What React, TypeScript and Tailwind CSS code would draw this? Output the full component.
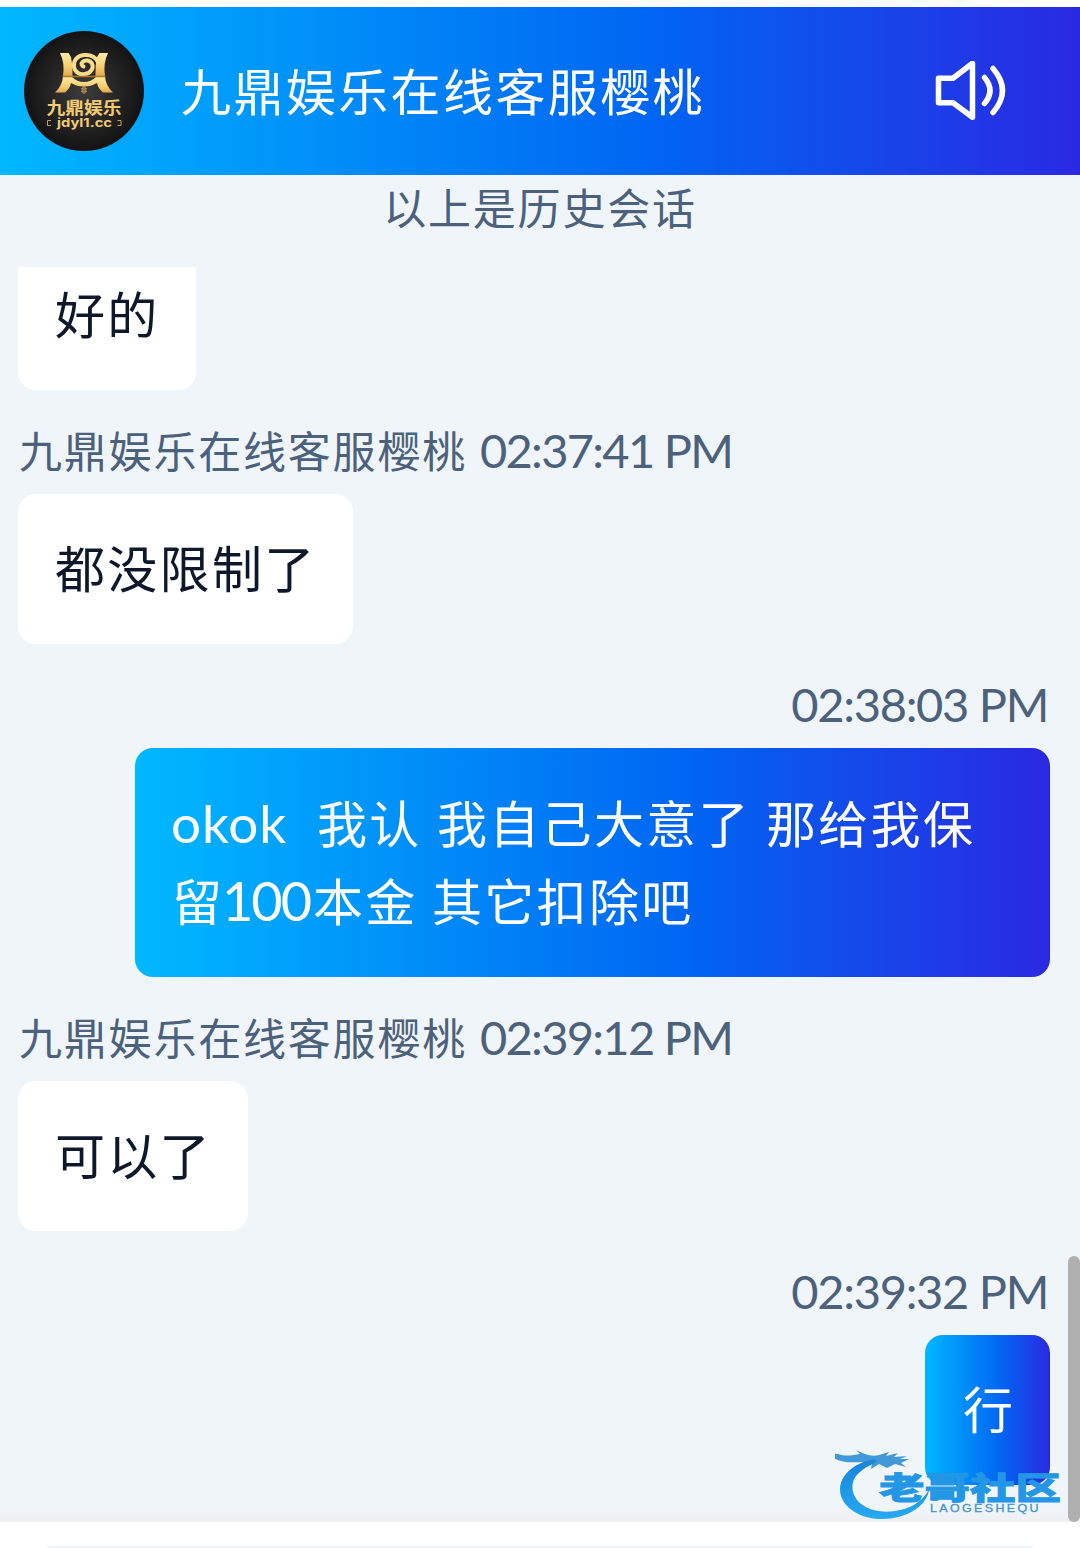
import type { ReactNode } from 'react';

const AGENT = '九鼎娱乐在线客服樱桃';

const GRADIENT =
  'bg-[linear-gradient(90deg,#00b8ff_0%,#0066f2_60%,#2a29e2_100%)]';

function Avatar() {
  return (
    <svg className="size-30 shrink-0" viewBox="0 0 120 120">
      <defs>
        <radialGradient id="disc">
          <stop offset="0" stopColor="#3c3c3c" />
          <stop offset="1" stopColor="#131313" />
        </radialGradient>
        <linearGradient id="gold" x1="0" y1="0" x2="0" y2="1">
          <stop offset="0" stopColor="#ffe9a6" />
          <stop offset="0.6" stopColor="#f6cd70" />
          <stop offset="1" stopColor="#e3a94b" />
        </linearGradient>
      </defs>
      <circle cx="60" cy="60" r="60" fill="url(#disc)" />
      <g fill="url(#gold)">
        <path d="M36 22h8.500l2.500 4q2 9 1.500 19H39q2-13-3-23z" />
        <path d="M84 22h-8.500l-2.500 4q-2 9-1.500 19H81q-2-13 3-23z" />
        <path d="M39 46h9q5 5 12 5t12-5h9q1 9 8 15.500H79q-5-4-6-9.500-6 3.500-13 3.500t-13-3.500q-1 5.500-6 9.500H31q7-6.500 8-15.500z" />
      </g>
      <path
        d="M74 31C71 25 66 23.500 60 24c-7 .5-11 6-10 12 1 5.500 6 8 11 7 6-1 9-6 7-10.500-2-3.500-7-4-9.500-1.500-1.500 1.500-1 4 1 4.500"
        fill="none"
        stroke="#fbdc8c"
        strokeWidth="4"
        strokeLinecap="round"
      />
      <path d="M38.500 45.500h43" stroke="#a87925" strokeWidth="1.300" />
      <path
        d="M60 55.500l2.500 2.500h-5zM57.500 60h5l-2.500 2.500z"
        fill="none"
        stroke="#e2b55c"
        strokeWidth="1"
      />
      <text
        x="60"
        y="82.500"
        textAnchor="middle"
        textLength="75"
        lengthAdjust="spacingAndGlyphs"
        fontSize="17"
        fontWeight="700"
        fill="#f2cb73"
        className="font-['Noto_Sans_CJK_SC',sans-serif]"
      >
        九鼎娱乐
      </text>
      <text
        x="60.500"
        y="96"
        textAnchor="middle"
        textLength="55"
        lengthAdjust="spacingAndGlyphs"
        fontSize="12"
        fontWeight="700"
        fill="#f2cb73"
        className="font-[Inter,sans-serif]"
      >
        jdyl1.cc
      </text>
      <path
        d="M27 89.500h-3.500v5h3.500M93.500 89.500h3.500v5h-3.500"
        fill="none"
        stroke="#c9a04f"
        strokeWidth="1"
      />
    </svg>
  );
}

function SpeakerIcon() {
  return (
    <svg
      className="h-15 w-[71px]"
      viewBox="0 0 71 60"
      fill="none"
      stroke="white"
      strokeWidth="5.500"
      strokeLinecap="round"
      strokeLinejoin="round"
    >
      <path d="M37.500 2.300v54L18 41.700H3.500V17.300H18z" />
      <path d="M49.500 16.500q11 13 0 26" />
      <path d="M58 7.500q19 22 0 44" />
    </svg>
  );
}

function Meta({ name, time }: { name?: string; time: string }) {
  return (
    <div className="flex h-[60px] items-center whitespace-pre text-[#4c617c]">
      {name && (
        <span className="mr-[13px] ml-px pb-[6px] text-[43px] tracking-[1.8px]">
          {name}
        </span>
      )}
      <span
        className={`pb-[3px] font-[Lato,sans-serif] text-[47px] ${name ? 'tracking-[-1.7px]' : 'mr-[2px] tracking-[-1.3px]'}`}
      >
        {time}
      </span>
    </div>
  );
}

function Incoming({ children }: { children: ReactNode }) {
  return (
    <div className="flex h-[150px] w-fit items-center rounded-[18px] bg-white pr-[36px] pb-[6px] pl-[37px] text-[50px] tracking-[2.3px] text-[#0f172a]">
      {children}
    </div>
  );
}

// Dragon ring and wordmark stamped over the corner of the chat
function Watermark() {
  return (
    <svg
      className="absolute top-[1445px] left-[835px] h-[76px] w-[228px]"
      viewBox="0 0 228 76"
    >
      <defs>
        <linearGradient id="mark" x1="0" y1="0" x2="0" y2="1">
          <stop offset="0" stopColor="#1682dd" />
          <stop offset="1" stopColor="#27aaf0" />
        </linearGradient>
      </defs>
      <path
        d="M40 14C16 18 1 34 6 51c7 20 36 28 61 20 14-5 25-13 27-26-8 13-20 19-34 21-21 3-38-5-42-19-3-13 5-22 24-30z"
        fill="url(#mark)"
      />
      <path
        d="M3 9c9 3 15 1 22 0l-4-4c8 4 15 7 23 5l10-3-3 4 12-3-4 4 13-1-7 3 9 0-8 4 5 4-11-3-8 4-8-4-8 5 1-6-9 5 0-6c-10 0-25 3-35-9z"
        fill="#2388d5"
        opacity="0.85"
      />
      <text
        x="44"
        y="54"
        textLength="182"
        lengthAdjust="spacingAndGlyphs"
        fontSize="31"
        fontWeight="900"
        fill="#2496e6"
        stroke="#2496e6"
        strokeWidth="0.800"
        className="font-['Noto_Sans_CJK_SC',sans-serif]"
      >
        老哥社区
      </text>
      <text
        x="95"
        y="67"
        textLength="111"
        lengthAdjust="spacingAndGlyphs"
        fontSize="10.500"
        fill="#4793cf"
        stroke="#4793cf"
        strokeWidth="0.300"
        className="font-['Liberation_Sans',sans-serif] tracking-[2px]"
      >
        LAOGESHEQU
      </text>
    </svg>
  );
}

export default function App() {
  return (
    <div className="relative flex h-[1548px] w-[1080px] flex-col overflow-hidden bg-white pt-[7px] font-['Noto_Sans_CJK_SC',sans-serif] leading-none">
      <header
        className={`flex h-[168px] shrink-0 items-center pr-[74px] pl-6 ${GRADIENT}`}
      >
        <Avatar />
        <h1 className="ml-[37px] flex-1 pb-[5px] text-[50px] tracking-[2.4px] text-white">
          {AGENT}
        </h1>
        <SpeakerIcon />
      </header>

      <main className="flex h-[1347px] shrink-0 bg-[#f0f5f9] bg-[linear-gradient(0deg,#eeeff1,#f0f5f9_14px)]">
        <div className="flex flex-1 flex-col pr-[18px] pl-[18px]">
          <div className="flex h-[92px] justify-center pt-[10px] pl-[12px] text-[43px] tracking-[1.8px] text-[#4c617c]">
            以上是历史会话
          </div>

          <div className="flex h-[123px] items-end overflow-hidden">
            <Incoming>好的</Incoming>
          </div>

          <div className="mt-[32px]">
            <Meta name={AGENT} time="02:37:41 PM" />
          </div>
          <div className="mt-[12px]">
            <Incoming>都没限制了</Incoming>
          </div>

          <div className="mt-[32px] flex justify-end">
            <Meta time="02:38:03 PM" />
          </div>
          <div
            className={`mt-[12px] ml-auto h-[229px] w-[915px] rounded-[18px] pt-[34px] pl-[36px] text-[50px] leading-[78px] tracking-[2.3px] whitespace-pre text-white ${GRADIENT}`}
          >
            <div className="flex h-[78px]">
              <span className="w-[146px] pt-[2px] font-[Lato,sans-serif] text-[53px] tracking-[0.9px]">
                okok
              </span>
              <span className="w-[120px]">我认</span>
              <span className="w-[329px]">我自己大意了</span>
              <span>那给我保</span>
            </div>
            <div className="flex h-[78px]">
              <span className="w-[51px] pl-px">留</span>
              <span className="w-[91px] pt-[2px] font-[Lato,sans-serif] text-[54px] tracking-[-2px]">
                100
              </span>
              <span className="w-[119px]">本金</span>
              <span>其它扣除吧</span>
            </div>
          </div>

          <div className="mt-[32px]">
            <Meta name={AGENT} time="02:39:12 PM" />
          </div>
          <div className="mt-[12px]">
            <Incoming>可以了</Incoming>
          </div>

          <div className="mt-[32px] flex justify-end">
            <Meta time="02:39:32 PM" />
          </div>
          <div
            className={`mt-[12px] ml-auto flex h-[150px] w-[125px] items-center rounded-[18px] pb-[6px] pl-[38px] text-[50px] text-white ${GRADIENT}`}
          >
            行
          </div>
        </div>
        <div className="mt-auto h-[266px] w-3 rounded-full bg-[#b0b0b0]" />
      </main>

      <footer className="flex-1 px-10 pt-[24px]">
        <div className="h-10 rounded-t-xl border-t-2 border-[#eff4f4]" />
      </footer>

      <Watermark />
    </div>
  );
}
